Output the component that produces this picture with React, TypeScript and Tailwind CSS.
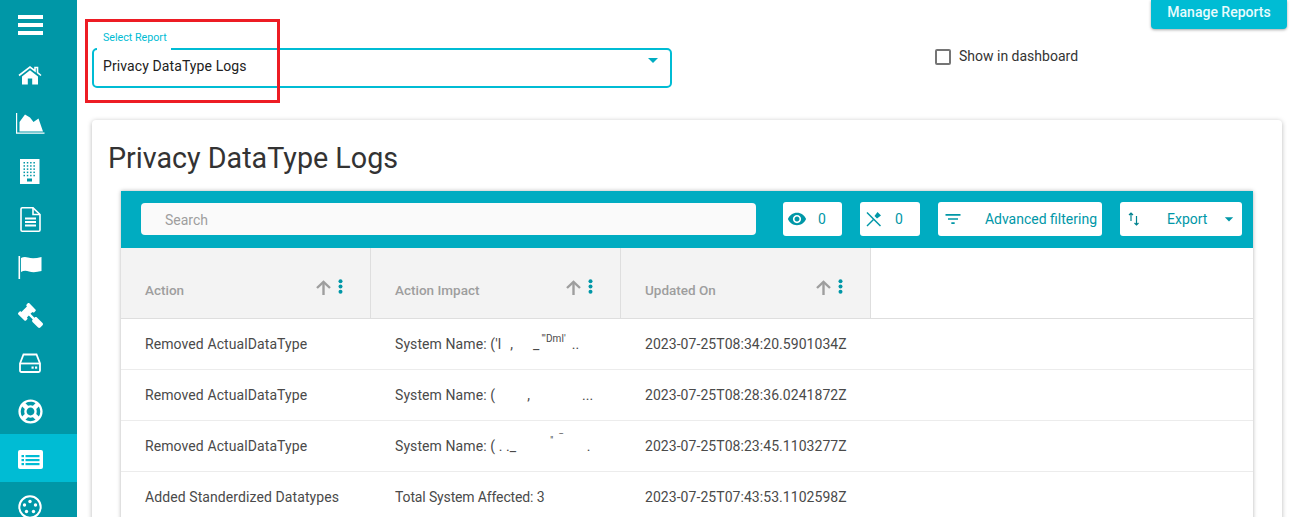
import { FaGavel, FaRegLifeRing } from "react-icons/fa";
import { MdVisibility, MdFilterList, MdArrowDropDown } from "react-icons/md";

function Hamburger() {
  return (
    <svg width="25" height="20" viewBox="0 0 25 20" fill="#fff">
      <rect x="0" y="0" width="25" height="4" />
      <rect x="0" y="8" width="25" height="4" />
      <rect x="0" y="16" width="25" height="4" />
    </svg>
  );
}

function HomeIcon() {
  return (
    <svg width="24" height="19" viewBox="0 0 24 19">
      <path d="M1 9.5 L12 1 L17 4.8 V1.5 H19.5 V6.7 L23 9.5" fill="none" stroke="#fff" strokeWidth="1.6" />
      <path d="M4 10.5 L12 4.3 L20 10.5 V18.5 H14.2 V12.5 H9.8 V18.5 H4 Z" fill="#fff" />
    </svg>
  );
}

function AreaChart() {
  return (
    <svg width="29" height="21" viewBox="0 0 29 21" fill="#fff">
      <path d="M0.6 0 V20.2 H28.5" fill="none" stroke="#fff" strokeWidth="1.2" />
      <path d="M3.5 18.5 V9 L9 1.5 L14 4.5 L17.5 9 L22.5 5.5 L27 18.5 Z" />
    </svg>
  );
}

function Building() {
  const dots = [];
  for (let r = 0; r < 5; r++) {
    for (let c = 0; c < 4; c++) {
      dots.push(<rect key={`${r}-${c}`} x={3.5 + c * 3.3} y={3 + r * 3.2} width="1.5" height="1.5" fill="#0097a7" />);
    }
  }
  return (
    <svg width="20" height="25" viewBox="0 0 20 25">
      <rect x="0" y="0" width="19.5" height="25" fill="#fff" />
      {dots}
      <rect x="7" y="19.5" width="5" height="3" fill="#0097a7" />
    </svg>
  );
}

function DocIcon() {
  return (
    <svg width="21" height="25" viewBox="0 0 21 25" fill="none" stroke="#fff" strokeWidth="1.6">
      <path d="M1 2 Q1 0.8 2.2 0.8 H13 L20 7.5 V23 Q20 24.2 18.8 24.2 H2.2 Q1 24.2 1 23 Z" />
      <path d="M13 0.8 V7.5 H20" />
      <path d="M5 11.5 H16 M5 15 H16 M5 18.5 H16" strokeWidth="1.8" />
    </svg>
  );
}

function FlagIcon() {
  return (
    <svg width="24" height="23" viewBox="0 0 24 23" fill="#fff">
      <rect x="0.5" y="0" width="1.6" height="23" />
      <path d="M3 2 Q6 0.5 10 1.5 Q15 3.3 23.5 1 V15 Q16 17 11 15.5 Q6.5 14 3 16 Z" />
    </svg>
  );
}

function Drive() {
  return (
    <svg width="22" height="20" viewBox="0 0 22 20" fill="none" stroke="#fff" strokeWidth="1.8">
      <path d="M1 10.5 L4.5 1.5 H17.5 L21 10.5 V17.5 Q21 19 19.5 19 H2.5 Q1 19 1 17.5 Z" />
      <path d="M1 10.5 H21" />
      <rect x="12.5" y="13.5" width="2.2" height="2.2" fill="#fff" stroke="none" />
      <rect x="16" y="13.5" width="2.2" height="2.2" fill="#fff" stroke="none" />
    </svg>
  );
}

function ListCard() {
  return (
    <svg width="25" height="19" viewBox="0 0 25 19">
      <rect x="0" y="0" width="25" height="19" rx="2" fill="#fff" />
      <rect x="3.5" y="5" width="2.5" height="2.2" fill="#00bcd4" />
      <rect x="3.5" y="9" width="2.5" height="2.2" fill="#00bcd4" />
      <rect x="3.5" y="13" width="2.5" height="2.2" fill="#00bcd4" />
      <rect x="7.5" y="5" width="14" height="2.2" fill="#00bcd4" />
      <rect x="7.5" y="9" width="14" height="2.2" fill="#00bcd4" />
      <rect x="7.5" y="13" width="14" height="2.2" fill="#00bcd4" />
    </svg>
  );
}

function PlugCircle() {
  return (
    <svg width="24" height="24" viewBox="0 0 24 24">
      <circle cx="12" cy="12" r="10.7" fill="none" stroke="#fff" strokeWidth="2" />
      <circle cx="6.5" cy="10" r="1.7" fill="#fff" />
      <circle cx="17.5" cy="10" r="1.7" fill="#fff" />
      <circle cx="12" cy="6.5" r="1.7" fill="#fff" />
      <circle cx="8.5" cy="16.5" r="1.7" fill="#fff" />
      <circle cx="15.5" cy="16.5" r="1.7" fill="#fff" />
    </svg>
  );
}

function PinOff() {
  return (
    <svg width="16" height="16" viewBox="0 0 16 16" fill="none" stroke="#0097a7" strokeWidth="1.5">
      <path d="M1 1.5 L14.5 15" />
      <path d="M1 15 L7.5 8.5" />
      <path d="M8.5 5 L11.5 1 L15 4.5 L11 7.5 Z" fill="#0097a7" stroke="none" />
    </svg>
  );
}

function SortIcon() {
  return (
    <svg width="12" height="14" viewBox="0 0 12 14" fill="none" stroke="#00838f" strokeWidth="1.2">
      <path d="M3 9 V1 M1 3 L3 1 L5 3" />
      <path d="M8.5 4 V13 M6.5 11 L8.5 13 L10.5 11" />
    </svg>
  );
}

function UpArrow() {
  return (
    <svg width="15" height="15" viewBox="0 0 15 15" fill="none" stroke="#9e9e9e" strokeWidth="2.4">
      <path d="M7.5 15 V2" />
      <path d="M1 8 L7.5 1.8 L14 8" />
    </svg>
  );
}

function Kebab() {
  return (
    <svg width="5" height="15" viewBox="0 0 5 15" fill="#0097a7">
      <circle cx="2.5" cy="2.2" r="2" />
      <circle cx="2.5" cy="7.5" r="2" />
      <circle cx="2.5" cy="12.8" r="2" />
    </svg>
  );
}

const navIcons = [
  <HomeIcon />,
  <AreaChart />,
  <Building />,
  <DocIcon />,
  <FlagIcon />,
  <FaGavel size={25} color="#fff" className="-scale-x-100" />,
  <Drive />,
  <FaRegLifeRing size={25} color="#fff" />,
  <ListCard />,
  <PlugCircle />,
];

function HeaderCell({ label }: { label: string }) {
  return (
    <div className="relative flex h-[70px] w-[250px] items-center border-r border-[#dedede] bg-[#f3f3f3] pl-6 pt-[15px]">
      <span className="text-[13.5px] font-medium text-[#9e9e9e]">{label}</span>
      <div className="absolute left-[195px] top-[32px] flex items-start">
        <UpArrow />
        <span className="ml-[7px] -mt-[1px] flex">
          <Kebab />
        </span>
      </div>
    </div>
  );
}

function Row({ a, b, c, last }: { a: string; b: React.ReactNode; c: string; last?: boolean }) {
  return (
    <div className={`flex h-[51px] items-center text-[14px] leading-[20px] tracking-[0.09px] text-[#4a4a4a] ${last ? "pb-[1px]" : "border-b border-[#ececec]"}`}>
      <div className="w-[250px] pl-6">{a}</div>
      <div className="flex h-[20px] w-[250px] items-start whitespace-nowrap pl-6">{b}</div>
      <div className="w-[250px] pl-6 tracking-[0.055px]">{c}</div>
    </div>
  );
}

export default function App() {
  return (
    <div className="relative flex h-[517px] w-[1295px] overflow-hidden bg-white font-['Roboto',sans-serif] text-[14px]">
      <aside className="flex w-[77px] shrink-0 flex-col bg-[#0097a7]">
        <div className="flex h-[50px] shrink-0 justify-center pr-[16px] pt-[15px]">
          <Hamburger />
        </div>
        {navIcons.map((icon, i) => (
          <div
            key={i}
            className={`flex h-[48px] shrink-0 items-center justify-center pr-[17px] pt-[2px] ${i === 8 ? "bg-[#00bcd4]" : ""}`}
          >
            {icon}
          </div>
        ))}
      </aside>

      <main className="relative min-w-0 flex-1 pl-[15px] pr-[13px]">
        <div className="flex h-[120px] items-start">
          <div className="relative mt-[48px] flex h-[40px] w-[580px] rounded-[5px] border-2 border-[#00bcd4] pl-[9px] pt-[6px] text-[14px] tracking-[0.1px] text-[#212121]">
            <span className="absolute -top-[20px] left-[3px] h-[20px] bg-white pl-[6px] pr-[4px] text-[10.7px] leading-[16px] tracking-normal text-[#00bcd4]">
              Select Report
            </span>
            Privacy DataType Logs
            <MdArrowDropDown size={24} color="#00acc1" className="absolute right-[5px] top-[-2px]" />
          </div>
          <label className="ml-[263px] mt-[46px] flex items-center gap-2 text-[14px] text-[#333]">
            <span className="h-[16px] w-[16px] rounded-[2px] border-2 border-[#757575]" />
            Show in dashboard
          </label>
          <button className="absolute right-[8px] top-0 h-[29px] w-[136px] rounded-b-[4px] bg-[#00bcd4] pb-[5px] text-[14px] font-medium text-[#e8fbfd] shadow-[0_1px_3px_rgba(0,0,0,0.35)]">
            Manage Reports
          </button>
        </div>

        <section className="h-[420px] w-[1190px] rounded-[4px] bg-white px-[29px] shadow-[0_1px_5px_rgba(0,0,0,0.28)]">
          <h1 className="-ml-[13px] h-[71px] pt-[19px] text-[28.7px] leading-[38px] text-[#333]">Privacy DataType Logs</h1>
          <div className="w-[1132px] shadow-[0_0_4px_rgba(0,0,0,0.3)]">
            <div className="flex h-[57px] items-center bg-[#00acc1] pl-5 pb-[1px]">
              <div className="flex h-[32px] w-[615px] items-center rounded-[4px] bg-[#fafafa] pl-6 pt-[2px] text-[14px] text-[#9e9e9e]">
                Search
              </div>
              <div className="ml-[27px] flex h-[34px] w-[59px] items-center rounded-[3px] bg-white pl-[5px] text-[#0097a7]">
                <MdVisibility size={18} color="#0097a7" className="scale-110" />
                <span className="ml-[12px]">0</span>
              </div>
              <div className="ml-[18px] flex h-[34px] w-[60px] items-center rounded-[3px] bg-white pl-[6px] text-[#0097a7]">
                <PinOff />
                <span className="ml-[13px]">0</span>
              </div>
              <div className="ml-[18px] flex h-[34px] w-[164px] items-center justify-between rounded-[3px] bg-white pl-[5px] pr-[5px] text-[#0097a7]">
                <MdFilterList size={20} color="#0097a7" />
                Advanced filtering
              </div>
              <div className="ml-[18px] flex h-[34px] w-[122px] items-center rounded-[3px] bg-white pl-[8px] text-[#0097a7]">
                <SortIcon />
                <span className="ml-[27px]">Export</span>
                <MdArrowDropDown size={20} color="#0097a7" className="ml-[12px]" />
              </div>
            </div>
            <div className="flex border-b border-[#dedede]">
              <HeaderCell label="Action" />
              <HeaderCell label="Action Impact" />
              <HeaderCell label="Updated On" />
            </div>
            <Row
              a="Removed ActualDataType"
              b={<>System Name: ('l<span className="ml-[9px]">,</span><span className="ml-[20px]">_</span><span className="ml-[2px] -mt-[2px] text-[10px] leading-[14px]">'''Dml'</span><span className="ml-[6px]">..</span></>}
              c="2023-07-25T08:34:20.5901034Z"
            />
            <Row
              a="Removed ActualDataType"
              b={<>System Name: (<span className="ml-[32px]">,</span><span className="ml-[52px]">...</span></>}
              c="2023-07-25T08:28:36.0241872Z"
            />
            <Row
              a="Removed ActualDataType"
              b={<>System Name: ( . ._<span className="ml-[34px] -mt-[2px] text-[10px] leading-[14px]">''</span><span className="ml-[6px] -mt-[4px] text-[10px] leading-[14px]">‾</span><span className="ml-[24px]">.</span></>}
              c="2023-07-25T08:23:45.1103277Z"
            />
            <Row
              a="Added Standerdized Datatypes"
              b={<span className="tracking-[-0.01em]">Total System Affected: 3</span>}
              c="2023-07-25T07:43:53.1102598Z"
              last
            />
          </div>
        </section>

        <div className="pointer-events-none absolute left-[8px] top-[19px] h-[84px] w-[195px] border-[3px] border-[#ed1c24]" />
      </main>
    </div>
  );
}
